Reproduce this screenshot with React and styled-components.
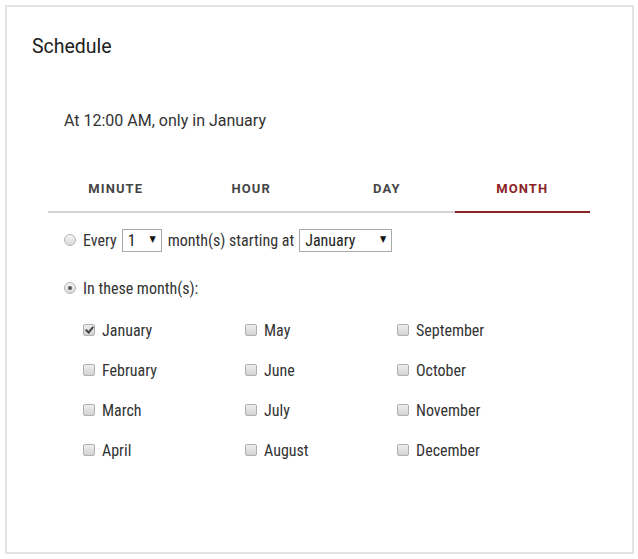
import styled, { createGlobalStyle } from 'styled-components'

const GlobalStyle = createGlobalStyle`
  body {
    margin: 0;
    background: #fff;
    font-family: Roboto, "Noto Sans", sans-serif;
  }
`

const Card = styled.div`
  box-sizing: border-box;
  margin: 5px;
  width: 629px;
  height: 549px;
  border: 2px solid #e2e5e7;
  padding: 27px 42px 0 25px;
`

const Title = styled.h2`
  margin: 0;
  font-size: 19.5px;
  font-weight: 400;
  color: #212121;
  line-height: 26px;
`

const Summary = styled.p`
  margin: 50px 0 0 32px;
  font-size: 16px;
  color: #333;
  line-height: 22px;
`

const Tabs = styled.div`
  display: grid;
  grid-template-columns: repeat(4, 1fr);
  margin: 45px 0 0 16px;
  border-bottom: 2px solid #d4d4d4;
`

const Tab = styled.div`
  text-align: center;
  font-size: 13px;
  font-weight: 700;
  letter-spacing: 1.1px;
  padding: 4px 0 15px;
  margin-bottom: -2px;
  color: ${p => (p.$active ? '#8a2424' : '#454545')};
  border-bottom: 2px solid ${p => (p.$active ? '#8a2424' : 'transparent')};
`

const Options = styled.div`
  margin: 16px 0 0 32px;
  font-family: "Roboto Condensed", "Liberation Sans Narrow", "DejaVu Sans Condensed", Roboto, sans-serif;
  font-stretch: condensed;
  font-size: 16px;
  color: #333;
`

const Row = styled.label`
  display: flex;
  align-items: center;
  gap: 5px;
  height: 22px;
  margin-bottom: ${p => p.$gap || 0}px;
`

const Radio = styled.input.attrs({ type: 'radio' })`
  appearance: none;
  margin: 0 2px 0 0;
  width: 12px;
  height: 12px;
  border-radius: 50%;
  border: 1px solid #b5b5b5;
  background: linear-gradient(#f4f4f4, #d9d9d9);
  display: grid;
  place-items: center;
  &:checked::after {
    content: '';
    width: 4px;
    height: 4px;
    border-radius: 50%;
    background: #555;
  }
`

const SelectWrap = styled.span`
  position: relative;
  display: inline-flex;
  margin: 0 1px 0 0;
`

const Select = styled.select`
  appearance: none;
  box-sizing: border-box;
  width: ${p => p.$width}px;
  height: 23px;
  border: 1px solid #a9a9a9;
  border-radius: 0;
  background: #fff;
  padding: 0 0 0 5px;
  font: inherit;
  color: #222;
`

const Arrow = styled.span`
  position: absolute;
  right: 6px;
  top: 5px;
  font-size: 9px;
  color: #111;
  pointer-events: none;
`

const MonthGrid = styled.div`
  display: grid;
  grid-template-columns: 162px 152px 152px;
  grid-auto-flow: column;
  grid-template-rows: repeat(4, 40px);
  margin: 20px 0 0 19px;
`

const Check = styled.label`
  display: flex;
  align-items: center;
  gap: 7px;
  height: 22px;
`

const Box = styled.input.attrs({ type: 'checkbox' })`
  appearance: none;
  margin: 0;
  width: 12px;
  height: 12px;
  border-radius: 2px;
  border: 1px solid #b0b0b0;
  background: linear-gradient(#eeeeee, #d2d2d2);
  position: relative;
  &:checked::after {
    content: '';
    position: absolute;
    left: 3px;
    top: 0px;
    width: 3px;
    height: 6px;
    border: solid #444;
    border-width: 0 2px 2px 0;
    transform: rotate(40deg);
  }
`

const months = [
  'January', 'February', 'March', 'April',
  'May', 'June', 'July', 'August',
  'September', 'October', 'November', 'December',
]

export default function App() {
  return (
    <>
      <GlobalStyle />
      <Card>
        <Title>Schedule</Title>
        <Summary>At 12:00 AM, only in January</Summary>
        <Tabs>
          <Tab>MINUTE</Tab>
          <Tab>HOUR</Tab>
          <Tab>DAY</Tab>
          <Tab $active>MONTH</Tab>
        </Tabs>
        <Options>
          <Row $gap={26}>
            <Radio name='mode' />
            Every
            <SelectWrap>
              <Select $width={40} defaultValue='1'>
                {Array.from({ length: 12 }, (_, i) => <option key={i}>{i + 1}</option>)}
              </Select>
              <Arrow>▼</Arrow>
            </SelectWrap>
            month(s) starting at
            <SelectWrap>
              <Select $width={93} defaultValue='January'>
                {months.map(m => <option key={m}>{m}</option>)}
              </Select>
              <Arrow>▼</Arrow>
            </SelectWrap>
          </Row>
          <Row>
            <Radio name='mode' defaultChecked />
            In these month(s):
          </Row>
          <MonthGrid>
            {months.map(m => (
              <Check key={m}>
                <Box defaultChecked={m === 'January'} />
                {m}
              </Check>
            ))}
          </MonthGrid>
        </Options>
      </Card>
    </>
  )
}
